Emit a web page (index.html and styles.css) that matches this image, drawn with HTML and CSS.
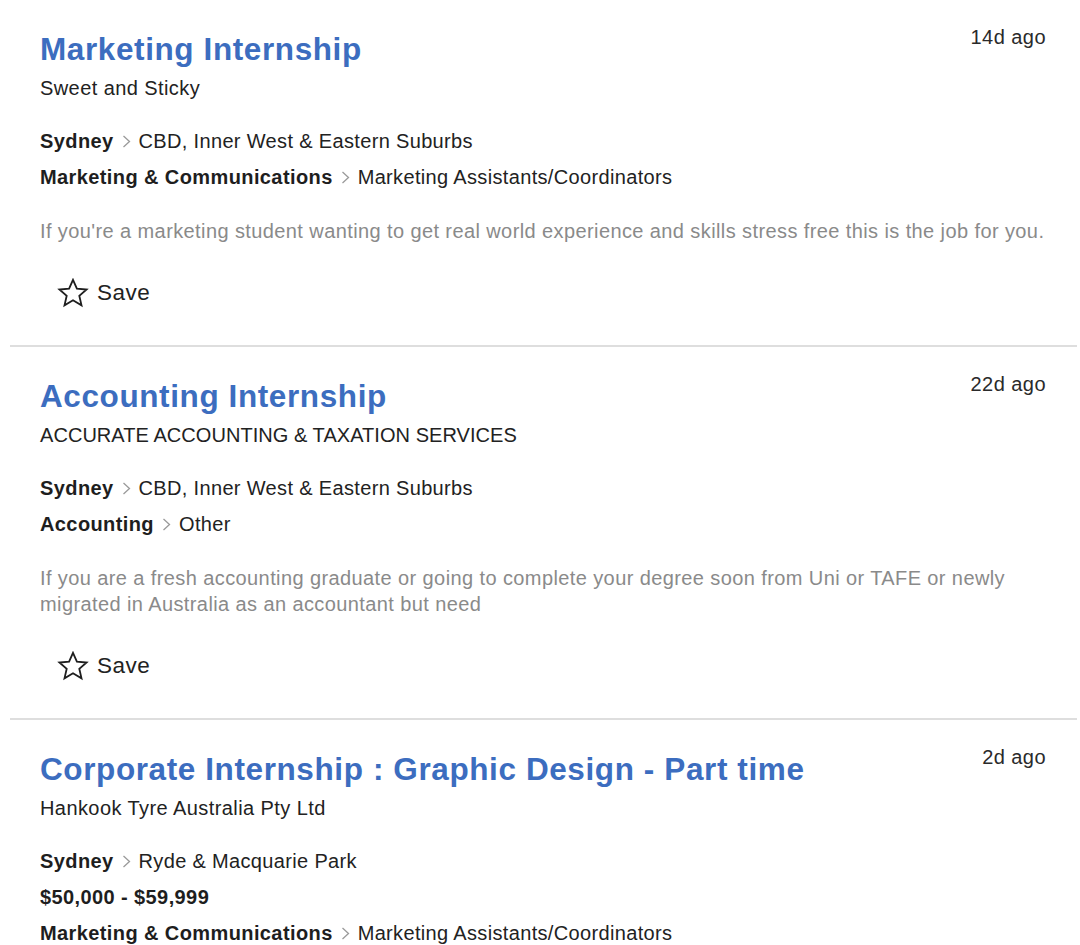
FILE: index.html
```html
<!DOCTYPE html>
<html lang="en">
<head>
<meta charset="utf-8">
<title>Jobs</title>
<link rel="stylesheet" href="styles.css">
</head>
<body>
<div class="list">
  <article class="job">
    <div class="head">
      <h2 class="title">Marketing Internship</h2>
      <span class="time">14d ago</span>
    </div>
    <div class="company">Sweet and Sticky</div>
    <div class="meta">
      <div class="crumb"><b>Sydney</b><svg class="chev" viewBox="0 0 9 13"><path d="M1.5 1 L7.5 6.5 L1.5 12" /></svg><span>CBD, Inner West &amp; Eastern Suburbs</span></div>
      <div class="crumb"><b>Marketing &amp; Communications</b><svg class="chev" viewBox="0 0 9 13"><path d="M1.5 1 L7.5 6.5 L1.5 12" /></svg><span>Marketing Assistants/Coordinators</span></div>
    </div>
    <p class="desc">If you're a marketing student wanting to get real world experience and skills stress free this is the job for you.</p>
    <div class="save"><svg class="star" viewBox="0 0 32 30"><path d="M16 1.8 L19.9 10.6 L29.6 11.5 L22.3 17.8 L24.5 27.3 L16 22.3 L7.5 27.3 L9.7 17.8 L2.4 11.5 L12.1 10.6 Z" /></svg><span>Save</span></div>
  </article>
  <article class="job">
    <div class="head">
      <h2 class="title">Accounting Internship</h2>
      <span class="time">22d ago</span>
    </div>
    <div class="company company-caps">ACCURATE ACCOUNTING &amp; TAXATION SERVICES</div>
    <div class="meta">
      <div class="crumb"><b>Sydney</b><svg class="chev" viewBox="0 0 9 13"><path d="M1.5 1 L7.5 6.5 L1.5 12" /></svg><span>CBD, Inner West &amp; Eastern Suburbs</span></div>
      <div class="crumb"><b>Accounting</b><svg class="chev" viewBox="0 0 9 13"><path d="M1.5 1 L7.5 6.5 L1.5 12" /></svg><span>Other</span></div>
    </div>
    <p class="desc">If you are a fresh accounting graduate or going to complete your degree soon from Uni or TAFE or newly migrated in Australia as an accountant but need</p>
    <div class="save"><svg class="star" viewBox="0 0 32 30"><path d="M16 1.8 L19.9 10.6 L29.6 11.5 L22.3 17.8 L24.5 27.3 L16 22.3 L7.5 27.3 L9.7 17.8 L2.4 11.5 L12.1 10.6 Z" /></svg><span>Save</span></div>
  </article>
  <article class="job">
    <div class="head">
      <h2 class="title">Corporate Internship : Graphic Design - Part time</h2>
      <span class="time">2d ago</span>
    </div>
    <div class="company">Hankook Tyre Australia Pty Ltd</div>
    <div class="meta">
      <div class="crumb"><b>Sydney</b><svg class="chev" viewBox="0 0 9 13"><path d="M1.5 1 L7.5 6.5 L1.5 12" /></svg><span>Ryde &amp; Macquarie Park</span></div>
      <div class="crumb"><b>$50,000 - $59,999</b></div>
      <div class="crumb"><b>Marketing &amp; Communications</b><svg class="chev" viewBox="0 0 9 13"><path d="M1.5 1 L7.5 6.5 L1.5 12" /></svg><span>Marketing Assistants/Coordinators</span></div>
    </div>
  </article>
</div>
</body>
</html>
```

FILE: styles.css
```css
* { box-sizing: border-box; }
html, body {
  margin: 0;
  padding: 0;
  background: #ffffff;
  overflow: hidden;
}
body {
  font-family: "Liberation Sans", Arial, Helvetica, sans-serif;
  color: #222222;
  height: 945px;
}
.list {
  margin: 0 3px 0 10px;
}
.job {
  padding: 24px 31px 30px 30px;
  border-bottom: 2px solid #dedede;
}
.head {
  display: flex;
  justify-content: space-between;
  align-items: flex-start;
}
.title {
  margin: 5px 0 0 0;
  font-size: 31.5px;
  letter-spacing: 0.6px;
  line-height: 40px;
  font-weight: 700;
  color: #3c6dbf;
}
.time {
  font-size: 20px;
  letter-spacing: 0.45px;
  line-height: 26px;
  color: #2a2a2a;
}
.company {
  margin-top: 6px;
  font-size: 20px;
  letter-spacing: 0.42px;
  line-height: 26px;
  color: #222222;
}
.company-caps {
  letter-spacing: 0.05px;
}
.meta {
  margin-top: 22px;
  display: flex;
  flex-direction: column;
}
.crumb {
  display: flex;
  align-items: center;
  height: 36px;
  font-size: 20px;
  letter-spacing: 0.34px;
  color: #222222;
}
.crumb b {
  font-weight: 700;
  letter-spacing: 0.4px;
  color: #1e1e1e;
}
.chev {
  width: 9px;
  height: 13px;
  margin: 0 8px 0 8px;
  fill: none;
  stroke: #9a9a9a;
  stroke-width: 1.3;
}
.desc {
  margin: 23px 0 0 0;
  font-size: 20px;
  letter-spacing: 0.4px;
  line-height: 26px;
  color: #8a8a8a;
}
.save {
  margin-top: 27px;
  height: 44px;
  display: flex;
  align-items: center;
  padding-left: 17px;
  font-size: 22.5px;
  letter-spacing: 0.5px;
  color: #222222;
}
.star {
  width: 32px;
  height: 30px;
  margin-right: 8px;
  fill: none;
  stroke: #1e1e1e;
  stroke-width: 1.8;
  stroke-linejoin: miter;
}
```
